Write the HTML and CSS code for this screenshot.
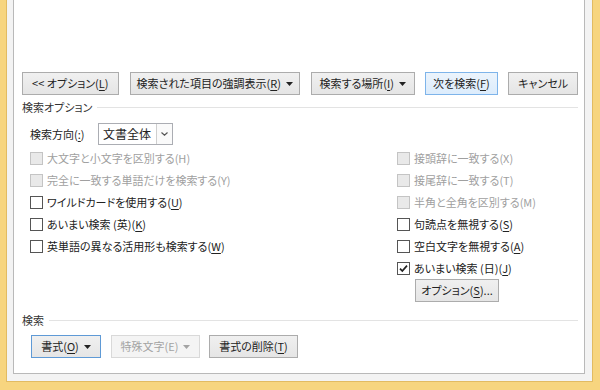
FILE: index.html
```html
<!DOCTYPE html>
<html lang="ja">
<head>
<meta charset="utf-8">
<link rel="stylesheet" href="styles.css">
</head>
<body>
<div class="frame">
  <div class="strip">
    <div class="dialog">
      <div class="btn-row">
        <div class="btn w-opt">&lt;&lt;&nbsp;オプション(<u>L</u>)</div>
        <div class="btn w-hl">検索された項目の強調表示(<u>R</u>)<svg class="caret" width="7" height="4" viewBox="0 0 7 4"><path d="M0 0H7L3.5 4Z"/></svg></div>
        <div class="btn w-loc">検索する場所(<u>I</u>)<svg class="caret" width="7" height="4" viewBox="0 0 7 4"><path d="M0 0H7L3.5 4Z"/></svg></div>
        <div class="btn btn-default w-next">次を検索(<u>F</u>)</div>
        <div class="btn w-cancel">キャンセル</div>
      </div>

      <div class="group-head head-opt"><span>検索オプション</span><i class="rule"></i></div>

      <div class="options">
        <div class="dir-row">
          <span class="dir-label">検索方向(<u>:</u>)</span>
          <div class="select">
            <span class="sel-text">文書全体</span>
            <span class="sel-btn"><svg width="7" height="4" viewBox="0 0 7 4"><path d="M0.5 0.5L3.5 3.2L6.5 0.5" fill="none" stroke="#555" stroke-width="1.2"/></svg></span>
          </div>
        </div>

        <div class="cols">
          <div class="col">
            <div class="chk disabled"><span class="box"></span><span>大文字と小文字を区別する(H)</span></div>
            <div class="chk disabled"><span class="box"></span><span>完全に一致する単語だけを検索する(Y)</span></div>
            <div class="chk"><span class="box"></span><span>ワイルドカードを使用する(<u>U</u>)</span></div>
            <div class="chk"><span class="box"></span><span>あいまい検索 (英)(<u>K</u>)</span></div>
            <div class="chk"><span class="box"></span><span>英単語の異なる活用形も検索する(<u>W</u>)</span></div>
          </div>
          <div class="col">
            <div class="chk disabled"><span class="box"></span><span>接頭辞に一致する(X)</span></div>
            <div class="chk disabled"><span class="box"></span><span>接尾辞に一致する(T)</span></div>
            <div class="chk disabled"><span class="box"></span><span>半角と全角を区別する(M)</span></div>
            <div class="chk"><span class="box"></span><span>句読点を無視する(<u>S</u>)</span></div>
            <div class="chk"><span class="box"></span><span>空白文字を無視する(<u>A</u>)</span></div>
            <div class="chk"><span class="box"><svg width="11" height="11" viewBox="0 0 11 11"><path d="M2 5.6L4.3 8L9 2.6" fill="none" stroke="#222" stroke-width="1.7"/></svg></span><span>あいまい検索 (日)(<u>J</u>)</span></div>
            <div class="btn w-optbtn">オプション(<u>S</u>)...</div>
          </div>
        </div>
      </div>

      <div class="group-head head-find"><span>検索</span><i class="rule"></i></div>

      <div class="btn-row bottom-row">
        <div class="btn btn-focus w-fmt">書式(<u>O</u>)<svg class="caret" width="7" height="4" viewBox="0 0 7 4"><path d="M0 0H7L3.5 4Z"/></svg></div>
        <div class="btn btn-disabled w-spc">特殊文字(E)<svg class="caret" width="7" height="4" viewBox="0 0 7 4"><path d="M0 0H7L3.5 4Z"/></svg></div>
        <div class="btn w-clr">書式の削除(<u>T</u>)</div>
      </div>
    </div>
  </div>
</div>
</body>
</html>
```

FILE: styles.css
```css
html, body {
  margin: 0;
  padding: 0;
}
body {
  width: 600px;
  height: 390px;
  overflow: hidden;
  font-family: "Noto Sans CJK JP", "Noto Sans", sans-serif;
  font-size: 11px;
  color: #222;
  font-feature-settings: "palt";
  line-height: 1;
}
u {
  text-decoration: underline;
  text-underline-offset: 2px;
}
.frame {
  box-sizing: border-box;
  height: 390px;
  background: #f7d57f;
  padding: 0 7px 8px 6px;
}
.strip {
  box-sizing: border-box;
  height: 100%;
  background: #f3f3f3;
  border: 1px solid #e2bb62;
  border-top: 0;
  padding: 0 7px 7px 6px;
}
.dialog {
  box-sizing: border-box;
  height: 100%;
  background: #fff;
  border: 1px solid #b9b9b9;
  border-top: 0;
  padding: 72px 6px 0 8px;
}
.btn-row {
  display: flex;
}
.btn {
  box-sizing: border-box;
  height: 23px;
  display: flex;
  align-items: center;
  justify-content: center;
  border: 1px solid #acacac;
  background: linear-gradient(#f0f0f0, #e5e5e5);
  white-space: nowrap;
}
.caret {
  margin-left: 5px;
  fill: #222;
}
.btn-default {
  border-color: #7eb4ea;
  background: linear-gradient(#ecf4fc, #dcecfc);
}
.btn-focus {
  border-color: #5f9ad6;
}
.btn-disabled {
  border-color: #d9d9d9;
  background: #f4f4f4;
  color: #a3a3a3;
}
.btn-disabled .caret {
  fill: #a3a3a3;
}
.w-opt { width: 97px; }
.w-hl { width: 171px; margin-left: 11px; }
.w-loc { width: 104px; margin-left: 11px; }
.w-next { width: 74px; margin-left: 10px; }
.w-cancel { width: 70px; margin-left: 10px; }

.group-head {
  display: flex;
  align-items: center;
  height: 14px;
  color: #333;
}
.group-head .rule {
  flex: 1;
  height: 1px;
  background: #e3e3e3;
  margin-left: 5px;
}
.head-opt { margin-top: 5px; }
.head-find { margin-top: 11px; }

.options {
  padding-left: 8px;
}
.dir-row {
  display: flex;
  align-items: center;
  margin-top: 9px;
}
.dir-label {
  width: 68px;
}
.select {
  box-sizing: border-box;
  width: 75px;
  height: 22px;
  border: 1px solid #abadb3;
  display: flex;
  align-items: stretch;
  font-size: 12px;
}
.sel-text {
  flex: 1;
  display: flex;
  align-items: center;
  padding-left: 4px;
}
.sel-btn {
  width: 15px;
  border-left: 1px solid #cfcfcf;
  background: #fafafa;
  display: flex;
  align-items: center;
  justify-content: center;
}
.cols {
  display: grid;
  grid-template-columns: 367px 1fr;
  margin-top: 2px;
}
.chk {
  height: 22px;
  display: flex;
  align-items: center;
  white-space: nowrap;
}
.box {
  box-sizing: border-box;
  width: 13px;
  height: 13px;
  border: 1px solid #555;
  background: #fff;
  margin-right: 4px;
  display: flex;
  align-items: center;
  justify-content: center;
  flex: none;
}
.chk.disabled {
  color: #a0a0a0;
}
.chk.disabled .box {
  border-color: #c4c4c4;
  background: #e9e9e9;
}
.w-optbtn {
  width: 84px;
  margin-left: 18px;
}
.bottom-row {
  margin-top: 8px;
  padding-left: 9px;
}
.w-fmt { width: 70px; }
.w-spc { width: 89px; margin-left: 10px; }
.w-clr { width: 89px; margin-left: 9px; }
```
